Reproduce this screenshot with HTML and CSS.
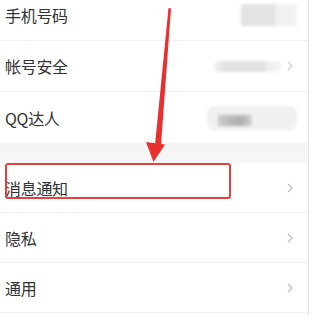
FILE: index.html
```html
<!DOCTYPE html>
<html lang="zh">
<head>
<meta charset="utf-8">
<link rel="stylesheet" href="styles.css">
</head>
<body>
<div class="screen">
  <div class="list">
    <div class="section first">
      <div class="row">
        <span class="label">手机号码</span>
        <div class="value v1"><span class="v1-dark"></span></div>
      </div>
      <div class="row">
        <span class="label">帐号安全</span>
        <div class="value v2"><span class="v2-dark"></span></div>
        <svg class="chev faint" width="6" height="10" viewBox="0 0 6 10"><polyline points="1,1 5,5 1,9" fill="none" stroke="#c4c4c4" stroke-width="1.2"/></svg>
      </div>
      <div class="row last">
        <span class="label">QQ达人</span>
        <div class="value v3"><span class="v3-dark"></span></div>
      </div>
    </div>
    <div class="gap"></div>
    <div class="section second">
      <div class="row">
        <span class="label">消息通知</span>
        <svg class="chev" width="6" height="10" viewBox="0 0 6 10"><polyline points="1,1 5,5 1,9" fill="none" stroke="#bdbdbd" stroke-width="1.2"/></svg>
      </div>
      <div class="row">
        <span class="label">隐私</span>
        <svg class="chev" width="6" height="10" viewBox="0 0 6 10"><polyline points="1,1 5,5 1,9" fill="none" stroke="#bdbdbd" stroke-width="1.2"/></svg>
      </div>
      <div class="row">
        <span class="label">通用</span>
        <svg class="chev" width="6" height="10" viewBox="0 0 6 10"><polyline points="1,1 5,5 1,9" fill="none" stroke="#bdbdbd" stroke-width="1.2"/></svg>
      </div>
    </div>
  </div>
  <div class="side"></div>
  <div class="highlight"></div>
  <svg class="arrow" width="325" height="316" viewBox="0 0 325 316">
    <polygon points="168.5,8 171,8.5 161,145 155,145" fill="#e8312f"/>
    <polygon points="146,142 165,144.5 153.5,162" fill="#e8312f"/>
  </svg>
</div>
</body>
</html>
```
FILE: styles.css
```css
html, body {
  margin: 0;
  padding: 0;
  background: #ffffff;
}
.screen {
  position: relative;
  width: 325px;
  height: 316px;
  overflow: hidden;
  display: flex;
  font-family: "Noto Sans CJK SC", "Noto Sans", sans-serif;
}
.list {
  width: 308px;
  flex: none;
  display: flex;
  flex-direction: column;
  margin-top: -10px;
  border-right: 1px solid #e4e4e4;
}
.side {
  flex: 1;
  background: #ffffff;
}
.section {
  background: #ffffff;
  display: flex;
  flex-direction: column;
}
.row {
  display: flex;
  align-items: center;
  padding: 0 15px 0 5px;
  box-sizing: border-box;
  border-bottom: 1px solid #efefef;
}
.first .row {
  height: 51px;
}
.second .row {
  height: 50px;
}
.row.last {
  border-bottom: none;
}
.label {
  font-size: 16px;
  color: #333333;
  letter-spacing: -0.3px;
}
.gap {
  height: 20px;
  background: #f5f5f5;
  background: linear-gradient(#f3f3f3, #f7f7f7);
}
.value {
  margin-left: auto;
  filter: blur(1.5px);
  display: flex;
  align-items: center;
}
.v1 {
  width: 56px;
  height: 22px;
  margin-right: -4px;
  background: linear-gradient(90deg, #e3e3e3 0%, #e3e3e3 60%, #f0f0f0 62%, #f2f2f2 100%);
}
.v1-dark {
  display: none;
}
.v2 {
  width: 68px;
  height: 11px;
  margin-right: 5px;
  border-radius: 5px;
  background: linear-gradient(90deg, #f4f4f4 0%, #e2e2e2 15%, #e2e2e2 75%, #f0f0f0 80%, #f5f5f5 100%);
}
.v2-dark {
  display: none;
}
.v3 {
  width: 90px;
  height: 24px;
  margin-right: -4px;
  border-radius: 8px;
  background: #f0f0f0;
  padding-left: 11px;
  box-sizing: border-box;
}
.v3-dark {
  display: block;
  width: 34px;
  height: 11px;
  margin-top: 5px;
  background: linear-gradient(90deg, #cccccc, #b8b8b8 40%, #b0b0b0 70%, #d6d6d6);
}
.chev {
  margin-left: auto;
  flex: none;
}
.value + .chev {
  margin-left: 0;
}
.chev.faint {
  opacity: 0.8;
}
.highlight {
  position: absolute;
  left: 5px;
  top: 163px;
  width: 226px;
  height: 36px;
  box-sizing: border-box;
  border: 2px solid #e2413d;
  border-radius: 3px;
}
.arrow {
  position: absolute;
  left: 0;
  top: 0;
}
```
